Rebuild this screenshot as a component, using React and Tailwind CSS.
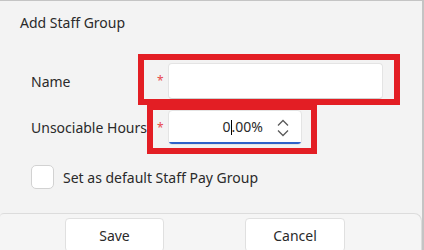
import React from "react";

export default function App() {
  return (
    <div className="w-[424px] h-[250px] overflow-hidden bg-[#f3f3f3] text-[#2a2a2a] font-['Noto_Sans','Segoe_UI',sans-serif]">
      <div className="relative w-[424px] h-[250px] border-t border-r-2 border-[#c4c4c4] flex flex-col">
        <div className="h-[45px] pl-[20px] pt-[12px] text-[14px] leading-[20px]">Add Staff Group</div>

        <div className="flex flex-col pl-[31px]">
          <div className="flex items-center mt-[17px] h-[36px]">
            <div className="w-[126px] text-[14px]">Name</div>
            <div className="w-[11px] text-[#e8474b] text-[12px] leading-none">*</div>
            <div className="w-[215px] h-[36px] bg-white rounded-[4px] border border-[#e4e4e4] border-b-[#cfcfcf]"></div>
          </div>

          <div className="flex items-center mt-[11px] h-[35px]">
            <div className="w-[126px] text-[14px] whitespace-nowrap">Unsociable Hours</div>
            <div className="w-[11px] text-[#e8474b] text-[12px] leading-none">*</div>
            <div className="relative w-[134px] h-[35px] bg-white rounded-[4px] border border-[#e4e4e4] overflow-hidden flex items-center">
              <div className="flex-1 text-right text-[14px] pr-[2px] relative -top-px">
                0<span className="inline-block w-px h-[15px] bg-black align-middle relative -top-px"></span>.00%
              </div>
              <div className="w-[36px] flex flex-col items-center justify-center gap-[2px] text-[#5a5a5a]">
                <svg width="12" height="8" viewBox="0 0 12 8" fill="none" stroke="currentColor" strokeWidth="1.3"><path d="M1 6.5 L6 1.5 L11 6.5" /></svg>
                <svg width="12" height="8" viewBox="0 0 12 8" fill="none" stroke="currentColor" strokeWidth="1.3"><path d="M1 1.5 L6 6.5 L11 1.5" /></svg>
              </div>
              <div className="absolute left-0 right-0 bottom-0 h-[2px] bg-[#2f62c8]"></div>
            </div>
          </div>

          <div className="flex items-center mt-[20px] h-[24px]">
            <div className="w-[23px] h-[24px] rounded-[5px] border border-[#d2d2d2] bg-white"></div>
            <div className="ml-[9px] text-[14px] whitespace-nowrap">Set as default Staff Pay Group</div>
          </div>
        </div>

        <div className="mt-auto h-[37px] border-t border-r border-[#dcdcdc] rounded-tr-[8px] rounded-tl-[4px] bg-[#f5f5f5] flex pt-[4px]">
          <div className="ml-[65px] w-[99px] h-[34px] bg-white border border-[#e0e0e0] rounded-[4px] flex items-center justify-center text-[14px]">Save</div>
          <div className="ml-[81px] w-[100px] h-[34px] bg-white border border-[#e0e0e0] rounded-[4px] flex items-center justify-center text-[14px]">Cancel</div>
        </div>

        <div className="absolute left-[138px] top-[53px] w-[262px] h-[51px] border-[6px] border-[#e31e24] pointer-events-none"></div>
        <div className="absolute left-[147px] top-[103px] w-[170px] h-[50px] border-[6px] border-[#e31e24] pointer-events-none"></div>
      </div>
    </div>
  );
}
